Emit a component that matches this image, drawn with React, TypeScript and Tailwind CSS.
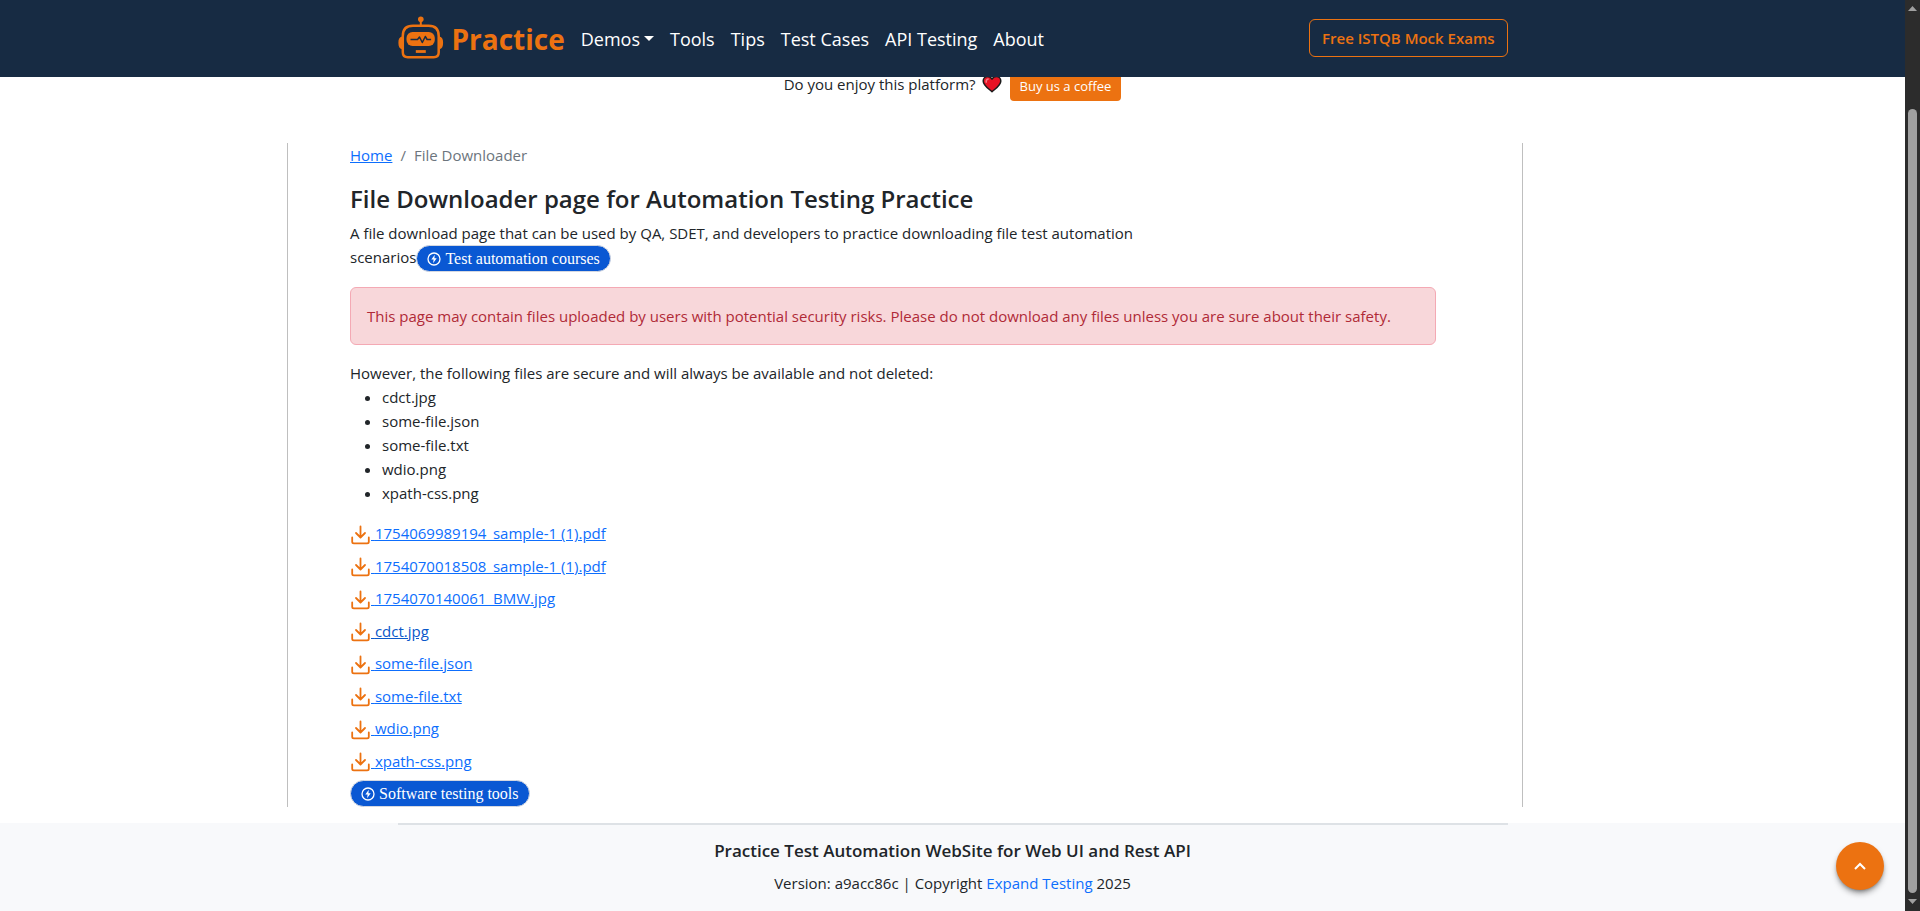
const navItems = ["Tools", "Tips", "Test Cases", "API Testing", "About"];

const safeFiles = ["cdct.jpg", "some-file.json", "some-file.txt", "wdio.png", "xpath-css.png"];

const downloads = [
  "1754069989194_sample-1 (1).pdf",
  "1754070018508_sample-1 (1).pdf",
  "1754070140061_BMW.jpg",
  "cdct.jpg",
  "some-file.json",
  "some-file.txt",
  "wdio.png",
  "xpath-css.png",
];

function RobotLogo() {
  return (
    <svg className="mb-[3px] h-[43px] w-[46px] shrink-0" viewBox="0 0 46 43" fill="none" stroke="#ec7211" aria-hidden="true">
      <circle cx="22.8" cy="3.2" r="2.8" fill="#ec7211" stroke="none" />
      <path d="M22.8 4v6" strokeWidth="2" />
      <path
        d="M15 9.800h15.600c6.500 0 10.100 3.600 10.100 10.100v16.300c0 3.300-1.700 5-5 5H9.800c-3.300 0-5-1.700-5-5V19.900c0-6.500 3.700-10.100 10.200-10.100z"
        strokeWidth="2.500"
      />
      <path
        d="M4 20.500c-2.600.5-3.600 2.500-3.600 6.300s1 6 3.600 6.500zM41.500 20.500c2.600.5 3.600 2.500 3.600 6.300s-1 6-3.600 6.500z"
        fill="#ec7211"
        stroke="none"
      />
      <rect x="8.500" y="16" width="28.300" height="14" rx="6" fill="#ec7211" stroke="none" />
      <path d="M12.500 23.500h7l2-2.500 2.800 5.500 3-6 1.800 3h4" stroke="#172b43" strokeWidth="1.500" strokeLinejoin="round" />
      <path d="M17.800 35.500h10" strokeWidth="2.800" />
    </svg>
  );
}

function Heart() {
  return (
    <svg className="h-5 w-5" viewBox="0 0 20 20" aria-hidden="true">
      <path
        d="M10 17.800C6.500 14.500 1.200 11.500 1.200 7 1.200 4.300 3.200 2.500 5.600 2.500c1.900 0 3.500 1 4.400 2.500.9-1.500 2.500-2.500 4.400-2.500 2.400 0 4.400 1.800 4.400 4.500 0 4.500-5.300 7.500-8.800 10.800z"
        fill="#e81224"
        stroke="#1b1b1b"
        strokeWidth="1.500"
        strokeLinejoin="round"
      />
      <path d="M4.200 8.200c-.2-1.800.6-3 2-3.200" fill="none" stroke="#f4777f" strokeWidth="1.500" strokeLinecap="round" />
    </svg>
  );
}

function DownloadIcon() {
  return (
    <svg
      className="mr-px inline-block h-5 w-5 align-middle"
      viewBox="0 0 20 20"
      fill="none"
      stroke="#ec7211"
      strokeWidth="1.800"
      strokeLinecap="round"
      strokeLinejoin="round"
      aria-hidden="true"
    >
      <path d="M10.500 1.500v10.500M6 8l4.500 4.500L15 8M2.200 12.500v4.200c0 1 .6 1.600 1.600 1.600h13.400c1 0 1.600-.6 1.600-1.600v-4.200" />
    </svg>
  );
}

function Pill({ children }: { children: string }) {
  return (
    <a
      href="#"
      className="inline-flex h-[27px] items-center gap-1 rounded-full border border-[#d5d8e0] bg-[#0a58d3] px-[10px] font-['Liberation_Serif',serif] text-base leading-5 font-medium text-white"
    >
      <svg className="h-[14px] w-[14px]" viewBox="0 0 14 14" fill="none" stroke="#fff" aria-hidden="true">
        <circle cx="7" cy="7" r="6" strokeWidth="1.300" />
        <path d="M7.800 2.800 4.300 7.600h2.300l-.5 3.600 3.600-4.900H7.400z" fill="#fff" stroke="none" />
      </svg>
      {children}
    </a>
  );
}

function Header() {
  return (
    <header className="sticky top-0 z-10 h-[77px] bg-[#172b43]">
      <div className="mx-auto flex h-full max-w-[1110px] items-center">
        <a href="#" className="mr-4 flex items-center gap-2 text-[28px] leading-9 font-bold text-[#ec7211]">
          <RobotLogo />
          <span>Practice</span>
        </a>
        <nav className="flex items-center gap-4 text-lg text-white">
          <button type="button" className="flex items-center gap-1">
            Demos
            <svg className="h-[5px] w-[10px]" viewBox="0 0 10 5" fill="#fff" aria-hidden="true">
              <path d="M0 0h10L5 5z" />
            </svg>
          </button>
          {navItems.map((item) => (
            <a key={item} href="#">
              {item}
            </a>
          ))}
        </nav>
        <a
          href="#"
          className="mb-px ml-auto flex h-[38px] items-center rounded-md border border-[#ec7211] px-3 text-[15px] font-semibold text-[#ec7211]"
        >
          Free ISTQB Mock Exams
        </a>
      </div>
    </header>
  );
}

function Content() {
  return (
    <main className="mt-[42px] grid grid-cols-[287fr_1236fr_382fr]">
      <div className="col-start-2 border-x border-[#bfbfbf] pr-[86px] pl-[62px]">
        <nav aria-label="Breadcrumb">
          <ol className="flex gap-2">
            <li>
              <a href="#" className="text-[#0d6efd] underline">
                Home
              </a>
            </li>
            <li className="text-[#6c757d]" aria-hidden="true">
              /
            </li>
            <li className="text-[#6c757d]">File Downloader</li>
          </ol>
        </nav>
        <h1 className="mt-4 mb-1.5 text-2xl leading-8 font-semibold">
          File Downloader page for Automation Testing Practice
        </h1>
        <p className="w-3/4">
          A file download page that can be used by QA, SDET, and developers to practice downloading file test automation
          scenarios
          <span className="-mt-1.5 -mb-1.5 inline-flex align-middle">
            <Pill>Test automation courses</Pill>
          </span>
        </p>
        <div role="alert" className="mt-[18px] mb-4 rounded-md border border-[#f4a9b4] bg-[#f8d7da] p-4 text-[#b02a37]">
          This page may contain files uploaded by users with potential security risks. Please do not download any files
          unless you are sure about their safety.
        </div>
        <p>However, the following files are secure and will always be available and not deleted:</p>
        <ul className="mb-4 list-disc pl-8">
          {safeFiles.map((name) => (
            <li key={name}>{name}</li>
          ))}
        </ul>
        <ul className="grid h-[260px] auto-rows-fr">
          {downloads.map((name, i) => (
            <li key={name}>
              <a href="#" className={i === 3 ? "text-[#0a58ca] underline" : "text-[#0d6efd] underline"}>
                <DownloadIcon /> {name}
              </a>
            </li>
          ))}
        </ul>
        <div className="-mt-px flex">
          <Pill>Software testing tools</Pill>
        </div>
      </div>
    </main>
  );
}

function Footer() {
  return (
    <footer className="mt-4 grow bg-[#f8f9fb]">
      <div className="mx-auto max-w-[1110px] border-t-2 border-[#dee2e6] pt-[14px] text-center">
        <h2 className="mb-2 text-[17px] leading-6 font-semibold">
          Practice Test Automation WebSite for Web UI and Rest API
        </h2>
        <p>
          Version: a9acc86c | Copyright{" "}
          <a href="#" className="text-[#0d6efd]">
            Expand Testing
          </a>{" "}
          2025
        </p>
      </div>
    </footer>
  );
}

function Scrollbar() {
  return (
    <div className="sticky top-0 flex h-screen flex-col items-center bg-[#2c2c2c] pt-[6px] pb-[7px]" aria-hidden="true">
      <svg className="h-[5px] w-[9px] shrink-0" viewBox="0 0 9 5" fill="#a0a0a0">
        <path d="M4.500 0 9 5H0z" />
      </svg>
      <div className="mt-[98px] mb-[6px] w-[9px] grow rounded-full bg-[#a0a0a0]" />
      <svg className="h-[5px] w-[9px] shrink-0" viewBox="0 0 9 5" fill="#a0a0a0">
        <path d="M4.500 5 9 0H0z" />
      </svg>
    </div>
  );
}

export default function App() {
  return (
    <div className="grid min-h-screen grid-cols-[1fr_15px] bg-white font-['Open_Sans','Noto_Sans',sans-serif] text-[15px] leading-6 text-[#212529]">
      <div className="flex min-h-screen flex-col">
        <Header />
        <div className="-mt-[7px] flex items-center justify-center gap-2">
          <div className="flex items-center gap-[6px] pb-1">
            <span>Do you enjoy this platform?</span>
            <Heart />
          </div>
          <a
            href="#"
            className="flex h-[31px] items-center rounded-sm bg-[#ec7211] px-[10px] text-[13px] text-white"
          >
            Buy us a coffee
          </a>
        </div>
        <Content />
        <Footer />
      </div>
      <Scrollbar />
      <button
        type="button"
        aria-label="Back to top"
        className="fixed right-9 bottom-[21px] flex h-12 w-12 items-center justify-center rounded-full bg-[#ec7211] shadow-md shadow-black/40"
      >
        <svg className="h-3 w-3" viewBox="0 0 12 12" fill="none" stroke="#fff" strokeWidth="2" aria-hidden="true">
          <path d="M1 9l5-5 5 5" />
        </svg>
      </button>
    </div>
  );
}
